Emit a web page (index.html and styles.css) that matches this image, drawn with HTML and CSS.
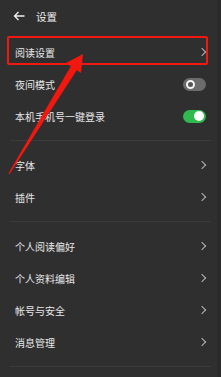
FILE: index.html
```html
<!DOCTYPE html>
<html lang="zh-CN">
<head>
  <meta charset="UTF-8">
  <meta name="viewport" content="width=device-width, initial-scale=1.0">
  <title>设置</title>
  <link rel="stylesheet" href="styles.css">
</head>
<body>
  <div class="page">
    <header class="topbar">
      <svg class="back" width="12" height="10" viewBox="0 0 12 10">
        <path d="M11.5 5H1.5M5.5 1L1.5 5l4 4" fill="none" stroke="#f2f2f2" stroke-width="1.3"/>
      </svg>
      <span class="title">设置</span>
    </header>

    <section class="group">
      <div class="row">
        <span>阅读设置</span>
        <span class="chev"></span>
        <div class="mark-box"></div>
      </div>
      <div class="row">
        <span>夜间模式</span>
        <span class="toggle off"><i></i></span>
      </div>
      <div class="row">
        <span>本机手机号一键登录</span>
        <span class="toggle on"><i></i></span>
      </div>
    </section>

    <section class="group">
      <div class="row"><span>字体</span><span class="chev"></span></div>
      <div class="row"><span>插件</span><span class="chev"></span></div>
    </section>

    <section class="group">
      <div class="row"><span>个人阅读偏好</span><span class="chev"></span></div>
      <div class="row"><span>个人资料编辑</span><span class="chev"></span></div>
      <div class="row"><span>帐号与安全</span><span class="chev"></span></div>
      <div class="row"><span>消息管理</span><span class="chev"></span></div>
    </section>

    <!-- annotation arrow -->
    <svg class="mark-arrow" width="221" height="377" viewBox="0 0 221 377">
      <polygon points="83,54 66,63 81,73" fill="#f2180f"/>
      <polygon points="71.5,65 77.5,69 9.6,174 8.4,173.4" fill="#f2180f"/>
    </svg>
  </div>
</body>
</html>
```

FILE: styles.css
```css
body {
  margin: 0;
  background: #2f2f2f;
  font-family: "Noto Sans CJK SC", "Noto Sans", sans-serif;
  color: #e8e8e8;
}
.page {
  position: relative;
  width: 217px;
  height: 377px;
  border-right: 4px solid #2a2a2a;
  overflow: hidden;
}
.topbar {
  display: flex;
  align-items: center;
  height: 24px;
  padding: 4px 0 0 13px;
}
.back {
  display: block;
}
.title {
  margin-left: 11px;
  font-size: 10.5px;
  color: #eeeeee;
}
.group {
  padding: 8px 0;
  margin: 0 6px 0 10px;
  border-bottom: 1px solid #3b3b3b;
}
.row {
  position: relative;
  display: flex;
  align-items: center;
  justify-content: space-between;
  height: 32px;
  padding: 0 5px;
  font-size: 10px;
}
.chev {
  width: 5px;
  height: 5px;
  border-top: 1.2px solid #b5b5b5;
  border-right: 1.2px solid #b5b5b5;
  transform: rotate(45deg);
  margin-right: 1px;
}
.toggle {
  position: relative;
  width: 23px;
  height: 13px;
  border-radius: 7px;
}
.toggle i {
  position: absolute;
  top: 2px;
  width: 9px;
  height: 9px;
  border-radius: 50%;
  box-sizing: border-box;
}
.toggle.off { background: #6b6b6b; }
.toggle.off i {
  left: 3px;
  background: #555;
  border: 2px solid #f4f4f4;
}
.toggle.on { background: #2fb94f; }
.toggle.on i {
  right: 2px;
  top: 1.5px;
  width: 10px;
  height: 10px;
  background: #ffffff;
}
.mark-box {
  position: absolute;
  left: -3px;
  top: 0;
  width: 201px;
  height: 29px;
  box-sizing: border-box;
  border: 2px solid #f2180f;
  border-radius: 2px;
}
.mark-arrow {
  position: absolute;
  left: 0;
  top: 0;
  pointer-events: none;
}
```
